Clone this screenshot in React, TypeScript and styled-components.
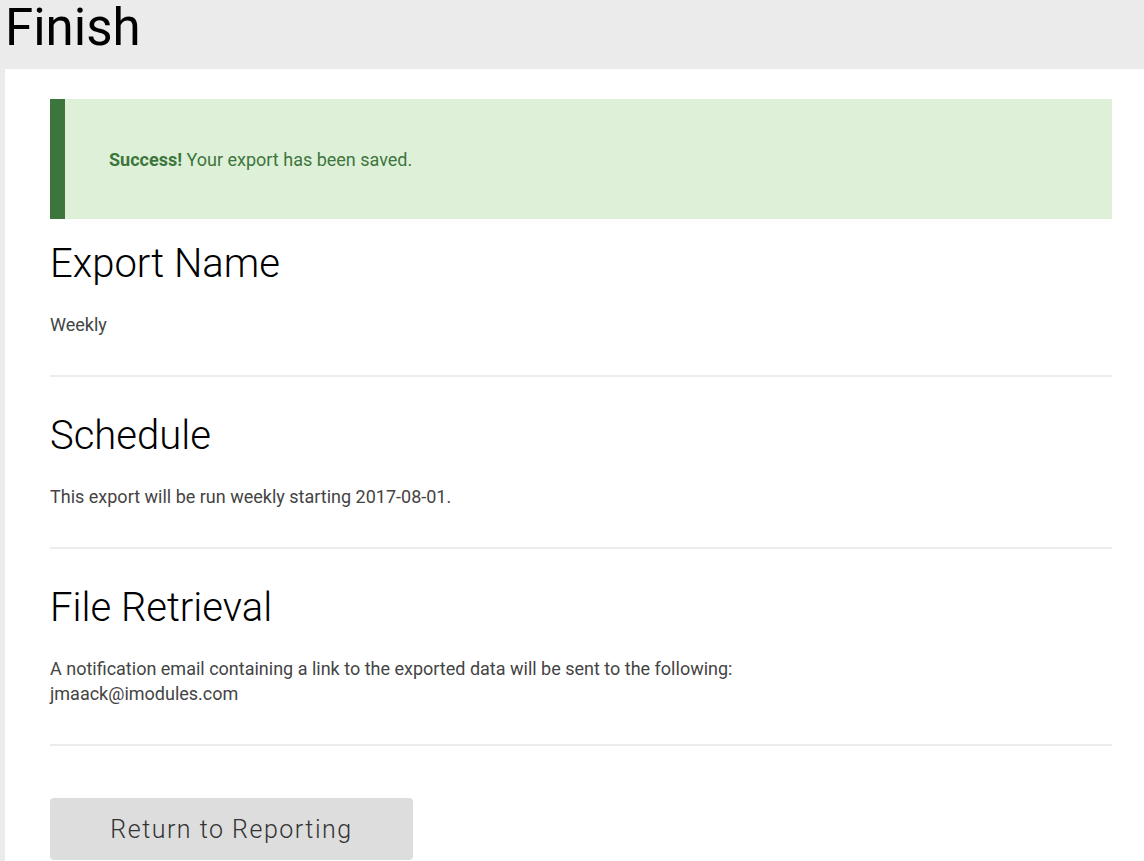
import React from 'react';
import styled, { createGlobalStyle } from 'styled-components';

const GlobalStyle = createGlobalStyle`
  body {
    margin: 0;
    background: #ebebeb;
    font-family: Roboto, "Liberation Sans", sans-serif;
  }
`;

const Header = styled.h1`
  margin: 0;
  height: 69px;
  padding-left: 5px;
  font-size: 51px;
  font-weight: 400;
  line-height: 56px;
  color: #000;
`;

const Panel = styled.div`
  margin-left: 5px;
  background: #fff;
  padding: 30px 32px 40px 45px;
  min-height: 760px;
`;

const Alert = styled.div`
  height: 120px;
  display: flex;
  align-items: center;
  background: #dff0d8;
  border-left: 15px solid #3c763d;
  padding-left: 44px;
  font-size: 18px;
  color: #3c763d;
  margin-bottom: 23px;
`;

const Section = styled.section`
  padding-bottom: 38px;
  border-bottom: 2px solid #ececec;
  margin-bottom: 37px;
`;

const Heading = styled.h2`
  margin: 0 0 26px;
  font-size: 40px;
  font-weight: 300;
  line-height: 44px;
  color: #000;
`;

const Text = styled.p`
  margin: 0;
  font-size: 18px;
  line-height: 25px;
  color: #444;
`;

const Button = styled.button`
  margin-top: 15px;
  width: 363px;
  height: 62px;
  border: none;
  border-radius: 4px;
  background: #dddddd;
  font-family: Roboto, "Liberation Sans", sans-serif;
  font-size: 25px;
  font-weight: 300;
  letter-spacing: 1.5px;
  color: #333;
`;

export default function App() {
  return (
    <>
      <GlobalStyle />
      <Header>Finish</Header>
      <Panel>
        <Alert>
          <strong>Success!</strong>&nbsp;Your export has been saved.
        </Alert>
        <Section>
          <Heading>Export Name</Heading>
          <Text>Weekly</Text>
        </Section>
        <Section>
          <Heading>Schedule</Heading>
          <Text>This export will be run weekly starting 2017-08-01.</Text>
        </Section>
        <Section>
          <Heading>File Retrieval</Heading>
          <Text>
            A notification email containing a link to the exported data will be sent to the following:
            <br />
            jmaack@imodules.com
          </Text>
        </Section>
        <Button>Return to Reporting</Button>
      </Panel>
    </>
  );
}
